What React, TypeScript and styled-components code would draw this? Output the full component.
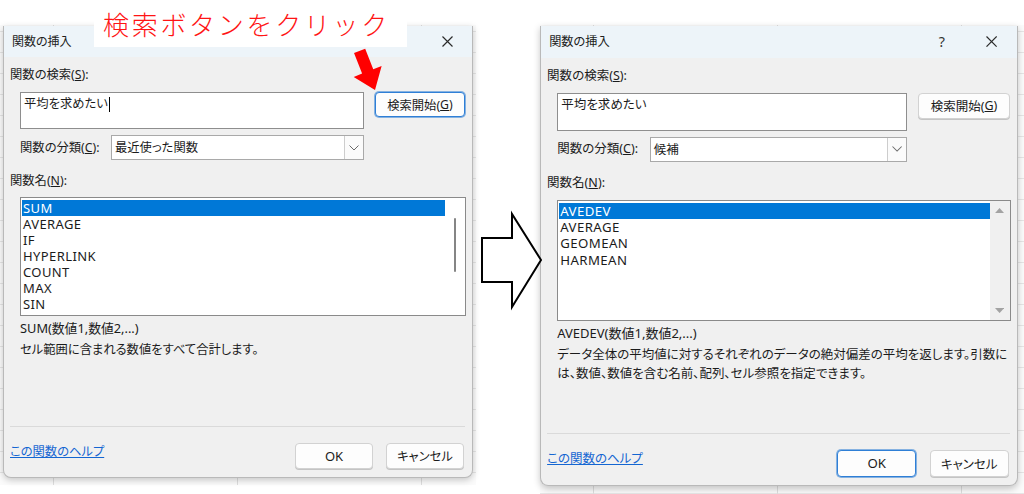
import React from "react";
import styled, { createGlobalStyle } from "styled-components";

const Global = createGlobalStyle`
  html, body { margin: 0; padding: 0; background: #ffffff; }
  body { font-family: "Noto Sans", "Noto Sans CJK JP", sans-serif; }
  #root { width: 1024px; height: 494px; overflow: hidden; }
`;

const Page = styled.div`
  position: relative;
  width: 1024px;
  height: 494px;
  display: flex;
  align-items: flex-start;
  background: #ffffff;
  overflow: hidden;
`;

const Shot = styled.div<{ $w: number; $h: number; $padLeft: number }>`
  flex: none;
  width: ${(p) => p.$w}px;
  height: ${(p) => p.$h}px;
  margin-top: 25px;
  padding: 1px 0 0 ${(p) => p.$padLeft}px;
  box-sizing: border-box;
  background-color: #fbfbfb;
  background-image: linear-gradient(to right, #dedede 1px, transparent 1px),
    linear-gradient(to bottom, #e6e6e6 1px, transparent 1px);
  background-size: 184px 100%, 100% 21px;
  background-position: 53px 0, 0 6px;
`;

const ArrowCol = styled.div`
  flex: none;
  width: 64px;
  padding-top: 210px;
  display: flex;
  position: relative;
  z-index: 2;
`;

const DialogBox = styled.div<{ $zoom: number }>`
  zoom: ${(p) => p.$zoom};
  width: 470px;
  height: 452px;
  display: flex;
  flex-direction: column;
  box-sizing: border-box;
  background: #f0f0f0;
  border: 1px solid #b9b9b9;
  border-top: none;
  border-radius: 0 0 8px 8px;
  box-shadow: 0 2px 7px rgba(0, 0, 0, 0.22);
  overflow: hidden;
  color: #1b1b1b;
  font-size: 12.3px;
  font-feature-settings: "palt";
`;

const TitleBar = styled.div`
  height: 31px;
  flex: none;
  display: flex;
  align-items: center;
  background: #edf4f9;
  padding-left: 8px;
  font-size: 12px;
  color: #202020;
`;

const TitleText = styled.span`
  flex: 1;
  line-height: 18px;
`;

const CaptionButton = styled.div<{ $w: number }>`
  width: ${(p) => p.$w}px;
  height: 31px;
  display: flex;
  align-items: center;
  justify-content: center;
  font-size: 14px;
  color: #333;
`;

const Body = styled.div`
  flex: 1;
  display: flex;
  flex-direction: column;
  padding: 9px 7px 8px 6px;
`;

const Label = styled.div<{ $mt?: number; $indent?: number }>`
  line-height: 18px;
  height: 18px;
  margin-top: ${(p) => p.$mt ?? 0}px;
  padding-left: ${(p) => p.$indent ?? 0}px;
  white-space: nowrap;
`;

const SearchRow = styled.div`
  display: flex;
  align-items: flex-start;
  gap: 11px;
  margin-top: 8px;
  padding-left: 10px;
`;

const TextBox = styled.div`
  width: 344px;
  height: 37px;
  box-sizing: border-box;
  background: #ffffff;
  border: 1px solid #8e8e8e;
  padding: 2px 3px;
  line-height: 18px;
  display: flex;
  align-items: flex-start;
`;

const Caret = styled.span`
  display: inline-block;
  width: 1px;
  height: 15px;
  margin-top: 2px;
  margin-left: 1px;
  background: #000;
`;

const Button = styled.div<{ $w: number; $h: number; $focused?: boolean }>`
  flex: none;
  width: ${(p) => p.$w}px;
  height: ${(p) => p.$h}px;
  box-sizing: border-box;
  display: flex;
  align-items: center;
  justify-content: center;
  background: #fdfdfd;
  border-radius: 4px;
  border: 1px solid ${(p) => (p.$focused ? "#2f7fd6" : "#d2d2d2")};
  box-shadow: ${(p) =>
    p.$focused ? "0 0 0 1px rgba(47,127,214,0.55)" : "0 1px 0 #c4c4c4"};
  color: #1b1b1b;
  white-space: nowrap;
`;

const OkText = styled.span`
  font-size: 13px;
`;

const CategoryRow = styled.div`
  display: flex;
  align-items: center;
  justify-content: space-between;
  width: 344px;
  margin-top: 6px;
  margin-left: 10px;
`;

const Select = styled.div`
  width: 253px;
  height: 25px;
  box-sizing: border-box;
  display: flex;
  background: #ffffff;
  border: 1px solid #a9a9a9;
`;

const SelectValue = styled.div`
  flex: 1;
  padding-left: 3px;
  line-height: 23px;
  white-space: nowrap;
`;

const SelectArrow = styled.div`
  width: 18px;
  display: flex;
  align-items: center;
  justify-content: center;
  border-left: 1px solid #cdcdcd;
  background: #fbfbfb;
`;

const ListBox = styled.div`
  width: 446px;
  height: 119px;
  margin-top: 7px;
  margin-left: 10px;
  box-sizing: border-box;
  display: flex;
  background: #ffffff;
  border: 1px solid #8a8a8a;
`;

const Rows = styled.div`
  flex: 1;
  padding: 2px 0 0 1px;
`;

const Row = styled.div<{ $selected?: boolean }>`
  height: 16px;
  line-height: 16px;
  padding-left: 1px;
  letter-spacing: 0.4px;
  font-size: 13px;
  color: ${(p) => (p.$selected ? "#ffffff" : "#1b1b1b")};
  background: ${(p) => (p.$selected ? "#0078d7" : "transparent")};
`;

const ScrollArea = styled.div<{ $full?: boolean }>`
  width: 20px;
  flex: none;
  position: relative;
  display: flex;
  flex-direction: column;
  justify-content: space-between;
  align-items: center;
  padding: 7px 0;
  box-sizing: border-box;
  background: ${(p) => (p.$full ? "#f0f0f0" : "transparent")};
`;

const ThinThumb = styled.div`
  position: absolute;
  left: 9px;
  top: 20px;
  width: 2px;
  height: 54px;
  border-radius: 1px;
  background: #858585;
`;

const Text = styled.div<{ $mt: number }>`
  margin-top: ${(p) => p.$mt}px;
  padding-left: 10px;
  line-height: 18px;
  white-space: nowrap;
`;

const Formula = styled(Text)`
  font-size: 12.8px;
`;

const Footer = styled.div`
  margin-top: auto;
  display: flex;
  flex-direction: column;
`;

const Separator = styled.div`
  height: 1px;
  background: #dadada;
  margin-bottom: 16px;
`;

const FooterRow = styled.div`
  display: flex;
  align-items: flex-start;
  gap: 13px;
  padding-right: 1px;
`;

const HelpLink = styled.a`
  flex: 1;
  line-height: 18px;
  color: #1466d2;
  text-decoration: underline;
  white-space: nowrap;
`;

const Annotation = styled.div`
  position: absolute;
  left: 94px;
  top: 0;
  width: 313px;
  height: 47px;
  background: #ffffff;
  color: #ff1414;
  font-family: "Noto Sans CJK JP", sans-serif;
  font-weight: 300;
  font-size: 26px;
  letter-spacing: 2.7px;
  line-height: 47px;
  padding-left: 9px;
  box-sizing: border-box;
  white-space: nowrap;
  z-index: 3;
`;

const RedArrow = styled.svg`
  position: absolute;
  left: 340px;
  top: 44px;
  z-index: 3;
`;

const CloseIcon = () => (
  <svg width="11" height="11" viewBox="0 0 11 11">
    <path d="M0.5 0.5 L10.5 10.5 M10.5 0.5 L0.5 10.5" stroke="#2a2a2a" strokeWidth="1.15" fill="none" />
  </svg>
);

const Chevron = () => (
  <svg width="10" height="6" viewBox="0 0 10 6">
    <path d="M0.5 0.5 L5 5 L9.5 0.5" stroke="#6a6a6a" strokeWidth="1" fill="none" />
  </svg>
);

const Tri = ({ up }: { up?: boolean }) => (
  <svg width="9" height="5" viewBox="0 0 9 5">
    <polygon points={up ? "0,5 9,5 4.5,0" : "0,0 9,0 4.5,5"} fill="#a3a3a3" />
  </svg>
);

type DialogProps = {
  zoom: number;
  category: string;
  items: string[];
  formula: string;
  desc: string[];
  caret?: boolean;
  searchFocused?: boolean;
  okFocused?: boolean;
  fullScroll?: boolean;
};

const Dialog = (p: DialogProps) => (
  <DialogBox $zoom={p.zoom}>
    <TitleBar>
      <TitleText>関数の挿入</TitleText>
      <CaptionButton $w={48}>?</CaptionButton>
      <CaptionButton $w={50}>
        <CloseIcon />
      </CaptionButton>
    </TitleBar>
    <Body>
      <Label>
        関数の検索(<u>S</u>):
      </Label>
      <SearchRow>
        <TextBox>
          平均を求めたい
          {p.caret && <Caret />}
        </TextBox>
        <Button $w={90} $h={25} $focused={p.searchFocused}>
          検索開始(<u>G</u>)
        </Button>
      </SearchRow>
      <CategoryRow>
        <Label>
          関数の分類(<u>C</u>):
        </Label>
        <Select>
          <SelectValue>{p.category}</SelectValue>
          <SelectArrow>
            <Chevron />
          </SelectArrow>
        </Select>
      </CategoryRow>
      <Label $mt={12}>
        関数名(<u>N</u>):
      </Label>
      <ListBox>
        <Rows>
          {p.items.map((it, i) => (
            <Row key={it} $selected={i === 0}>
              {it}
            </Row>
          ))}
        </Rows>
        <ScrollArea $full={p.fullScroll}>
          {p.fullScroll ? (
            <>
              <Tri up />
              <Tri />
            </>
          ) : (
            <ThinThumb />
          )}
        </ScrollArea>
      </ListBox>
      <Formula $mt={3}>{p.formula}</Formula>
      <Text $mt={4}>
        {p.desc.map((d, i) => (
          <div key={i}>{d}</div>
        ))}
      </Text>
      <Footer>
        <Separator />
        <FooterRow>
          <HelpLink>この関数のヘルプ</HelpLink>
          <Button $w={78} $h={26} $focused={p.okFocused}>
            <OkText>OK</OkText>
          </Button>
          <Button $w={78} $h={26}>
            キャンセル
          </Button>
        </FooterRow>
      </Footer>
    </Body>
  </DialogBox>
);

export default function App() {
  return (
    <>
      <Global />
      <Page>
        <Shot $w={476} $h={460} $padLeft={3}>
          <Dialog
            zoom={1}
            category="最近使った関数"
            items={["SUM", "AVERAGE", "IF", "HYPERLINK", "COUNT", "MAX", "SIN"]}
            formula="SUM(数値1,数値2,...)"
            desc={["セル範囲に含まれる数値をすべて合計します。"]}
            caret
            searchFocused
          />
        </Shot>
        <ArrowCol>
          <svg width="66" height="100" viewBox="0 0 66 100" style={{ overflow: "visible" }}>
            <polygon
              points="6,28 36,28 36,4 65,50 36,97 36,72 6,72"
              fill="#ffffff"
              stroke="#000000"
              strokeWidth="2"
              strokeLinejoin="miter"
            />
          </svg>
        </ArrowCol>
        <Shot $w={484} $h={469} $padLeft={0}>
          <Dialog
            zoom={1.017}
            category="候補"
            items={["AVEDEV", "AVERAGE", "GEOMEAN", "HARMEAN"]}
            formula="AVEDEV(数値1,数値2,...)"
            desc={[
              "データ全体の平均値に対するそれぞれのデータの絶対偏差の平均を返します。引数に",
              "は、数値、数値を含む名前、配列、セル参照を指定できます。",
            ]}
            okFocused
            fullScroll
          />
        </Shot>
        <Annotation>検索ボタンをクリック</Annotation>
        <RedArrow width="50" height="52" viewBox="0 0 50 52">
          <g transform="translate(35 46) rotate(-21.5)">
            <polygon points="-6,-42 6,-42 6,-20 15,-20 0,0 -15,-20 -6,-20" fill="#ff0000" />
          </g>
        </RedArrow>
      </Page>
    </>
  );
}
